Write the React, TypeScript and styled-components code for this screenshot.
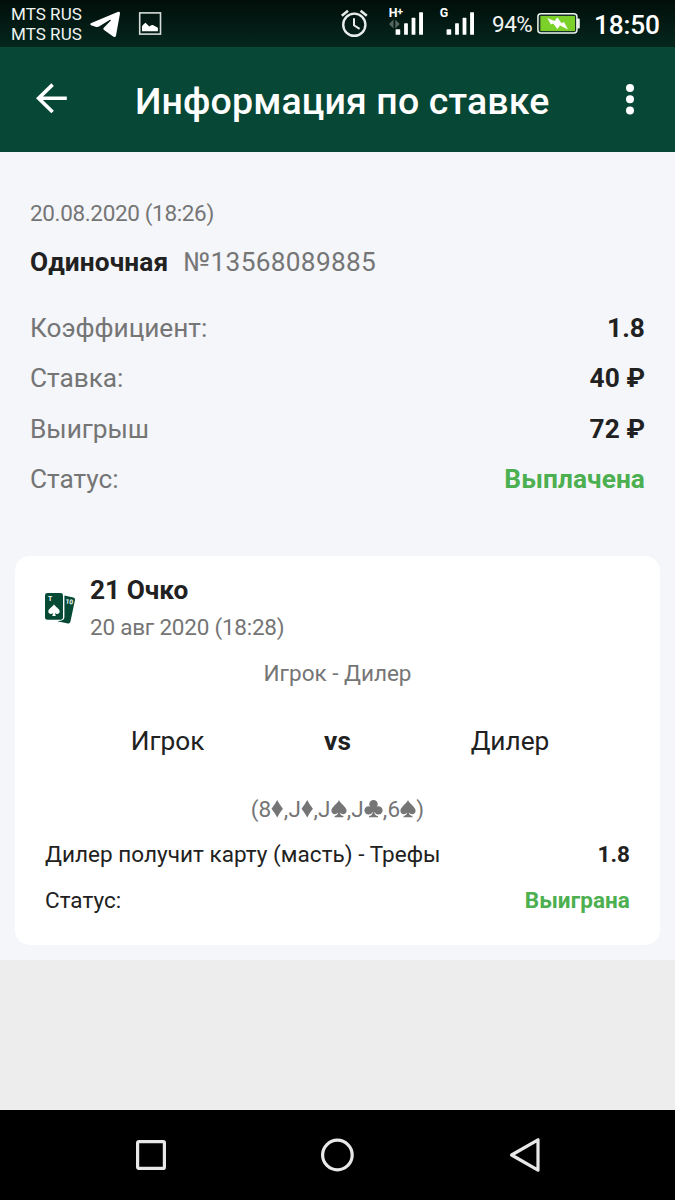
import React from "react";
import styled, { createGlobalStyle } from "styled-components";

const GlobalStyle = createGlobalStyle`
  * { box-sizing: border-box; }
  body { margin: 0; background: #ededed; font-family: Roboto, "Liberation Sans", sans-serif; }
  svg { display: block; flex: none; }
`;

const INK = "#212121";
const GREY = "#757575";
const GREEN = "#4caf50";
const BRAND = "#074735";

const Screen = styled.div`
  width: 675px;
  height: 1200px;
  display: flex;
  flex-direction: column;
  overflow: hidden;
`;

const StatusBar = styled.header`
  height: 47px;
  flex: none;
  display: flex;
  align-items: center;
  padding: 0 15px 0 11px;
  color: #fff;
  background: linear-gradient(#010e0a, #04271d);
`;

const Carriers = styled.div`
  width: 78px;
  padding-top: 3px;
  font-size: 17px;
  line-height: 19.6px;
  letter-spacing: 0.05px;
  white-space: nowrap;
  color: #f1f5f3;
`;

const Spacer = styled.div`
  flex: 1;
`;

const BatteryLevel = styled.span`
  margin: 1px 0 0 6px;
  width: 45px;
  font-size: 22.5px;
  letter-spacing: -0.5px;
  color: #f0f3f2;
`;

const Clock = styled.span`
  margin: 2px 0 0 14px;
  width: 66px;
  font-size: 26.25px;
  font-weight: 500;
  letter-spacing: -0.15px;
`;

const AppBar = styled.div`
  height: 105px;
  flex: none;
  display: flex;
  align-items: center;
  padding: 0 39px 0 35px;
  color: #fff;
  background: ${BRAND};
`;

const Title = styled.h1`
  flex: 1;
  margin: 0 0 0 66px;
  padding-top: 2px;
  font-size: 37.5px;
  font-weight: 500;
  line-height: 44px;
  letter-spacing: 0.12px;
  white-space: nowrap;
`;

const Content = styled.main`
  height: 808px;
  flex: none;
  padding: 46px 15px 0;
  background: #f4f6fa;
`;

const Summary = styled.section`
  height: 358px;
  padding: 0 15px;
  font-size: 26.25px;
`;

const Muted = styled.div<{ $center?: boolean; $tracking?: number }>`
  font-size: 22.5px;
  line-height: 30px;
  color: ${GREY};
  text-align: ${(p) => (p.$center ? "center" : "left")};
  letter-spacing: ${(p) => p.$tracking ?? 0}px;
`;

const Heading = styled.div`
  display: flex;
  gap: 15px;
  margin: 17px 0 23.8px;
  line-height: 34px;
  color: ${GREY};
`;

const Bold = styled.b`
  color: ${INK};
  font-weight: 700;
`;

const BetKind = styled(Bold)`
  letter-spacing: 0.12px;
`;

const BetNumber = styled.span`
  letter-spacing: 0.3px;
`;

const Row = styled.div`
  display: flex;
  justify-content: space-between;
  line-height: 50.5px;
  letter-spacing: -0.03px;
  color: ${GREY};
`;

const Value = styled.span<{ $positive?: boolean }>`
  font-weight: 700;
  letter-spacing: 0.08px;
  color: ${(p) => (p.$positive ? GREEN : INK)};
`;

const Card = styled.section`
  height: 389px;
  padding: 17px 30px 0;
  border-radius: 15px;
  background: #fff;
`;

const CardHead = styled.div`
  display: flex;
  gap: 14px;
  margin-bottom: 14px;
`;

const GameName = styled.div`
  height: 39px;
  font-size: 26.25px;
  font-weight: 700;
  line-height: 34px;
  color: ${INK};
`;

const Versus = styled.div`
  display: grid;
  grid-template-columns: 245px 95px 250px;
  margin: 36px -5px 36px 0;
  font-size: 26.25px;
  line-height: 34px;
  text-align: center;
  color: ${INK};
`;

const Hand = styled.div`
  display: flex;
  justify-content: center;
  align-items: center;
  height: 30px;
  margin-bottom: 7px;
  font-size: 22.5px;
  letter-spacing: 0.18px;
  color: ${GREY};
`;

const BetLine = styled.div`
  display: flex;
  justify-content: space-between;
  font-size: 22.5px;
  line-height: 46px;
  letter-spacing: 0.04px;
  color: ${INK};
`;

const NavBar = styled.nav`
  height: 90px;
  margin-top: auto;
  flex: none;
  display: flex;
  align-items: center;
  justify-content: space-between;
  padding: 0 134px 0 135px;
  background: #000;
`;

const TelegramIcon = () => (
  <svg width="32" height="47" viewBox="89 0 32 47" fill="#fff">
    <path d="M90.8 23.2 L118.2 11.8 Q120.3 11.3 120 13.5 L116 35.6 Q115.4 38 113.2 36.6 L103.7 29.7 Q102.8 28.8 103.8 27.8 L110.8 20.6 Q111 19.5 109.6 20 L99 26.6 Q97.8 27.3 96.2 26.9 L91 25.3 Q89.5 24.3 90.8 23.2Z" />
  </svg>
);

const PictureIcon = () => (
  <svg width="50" height="47" viewBox="121 0 50 47">
    <rect x="139.7" y="12.9" width="20.8" height="21.2" fill="none" stroke="#d5dcd9" strokeWidth="1.6" />
    <path d="M142 31.2 V26.3 Q143.5 24 145.5 22.8 L149.3 26.5 Q151.5 24.2 153.3 25.2 L157.9 27.8 V31.2Z" fill="#fff" />
  </svg>
);

const AlarmIcon = () => (
  <svg width="44" height="47" viewBox="340 0 44 47" fill="none" stroke="#e8edeb" strokeWidth="2.4">
    <circle cx="354.3" cy="24.7" r="11.1" />
    <path d="M354 18.2 V25.3 L359.6 28.8" strokeWidth="2" />
    <path d="M341.8 15.8 L348 10.8 M360.6 10.8 L366.8 15.8" strokeWidth="2.6" />
  </svg>
);

const SignalIcon = ({ label, roaming }: { label: string; roaming?: boolean }) => (
  <svg width="51" height="47" viewBox="384 0 51 47" fill="#fff">
    <text x="388.7" y="17.2" fontSize="12.4" fontWeight="700" fontFamily="Roboto">
      {label}
      {roaming && <tspan dy="-2.6" dx="-0.3" fontSize="10.5">+</tspan>}
    </text>
    {roaming && <path d="M389 24 L393.5 19.5 V28.5Z M399.8 24 L395.3 19.5 V28.5Z" fill="#56655f" />}
    <rect x="395.6" y="29.3" width="4.6" height="5.5" rx="0.6" />
    <rect x="404.1" y="23.3" width="3.8" height="11.5" rx="0.6" />
    <rect x="411.6" y="17.8" width="3.8" height="17" rx="0.6" />
    <rect x="419.1" y="12.2" width="3.9" height="22.6" rx="0.6" />
  </svg>
);

const BatteryIcon = () => (
  <svg width="43" height="47" viewBox="537 0 43 47">
    <rect x="576" y="18.4" width="3.8" height="10.2" rx="1" fill="#e8eeea" />
    <rect x="537.9" y="13.8" width="39" height="19.2" rx="3" fill="#173026" stroke="#eef3ee" strokeWidth="1.5" />
    <rect x="540.4" y="15.9" width="34.6" height="15.2" rx="0.6" fill="#7bd12a" />
    <path d="M547.3 18 L554.4 21 L557.4 17.4 L561.4 23 L564.2 22.3 L568 29.4 L560 25.4 L557.4 29 L553.2 23.6 L550.9 24.4Z" fill="#fff" />
  </svg>
);

const BackIcon = () => (
  <svg width="34" height="105" viewBox="35 47 34 105" fill="none" stroke="#fff" strokeWidth="3.6">
    <path d="M66.8 98.3 H39 M52.6 84.6 L38.6 98.3 L52.6 112" />
  </svg>
);

const MoreIcon = () => (
  <svg width="12" height="105" viewBox="624 47 12 105" fill="#fff">
    <circle cx="630" cy="88" r="4" />
    <circle cx="630" cy="99.3" r="4" />
    <circle cx="630" cy="110.6" r="4" />
  </svg>
);

const CardsIcon = () => (
  <svg width="31" height="71" viewBox="45 573 31 71" fill="#064a36">
    <path d="M64.4 595.6 L73.4 597.6 Q75.3 598.1 75 600 L70.4 621.8 Q69.8 623.8 68 623.4 L57.2 621.2 L61.6 620.4 Q64.4 619.8 64.4 617Z" />
    <rect x="45" y="593" width="18" height="26.8" rx="2.4" />
    <path d="M54 604.3 C55.2 607 59.7 608.6 59.7 611.6 C59.7 614 56.6 614.8 54.9 612.9 L55.8 616 H52.2 L53.1 612.9 C51.4 614.8 48.3 614 48.3 611.6 C48.3 608.6 52.8 607 54 604.3Z" fill="#fff" />
    <text x="47.9" y="601" fontSize="6.8" fontWeight="700" fontFamily="Roboto" fill="#fff">T</text>
    <text x="65.5" y="604" fontSize="6.6" fontWeight="700" fontFamily="Roboto" fill="#fff" transform="rotate(8 69 602)">10</text>
  </svg>
);

type SuitName = "diamond" | "spade" | "club";

const SUITS: Record<SuitName, { width: number; label: string; shape: React.ReactNode }> = {
  diamond: {
    width: 12.4,
    label: "♦",
    shape: <path d="M6.2 0 Q8.6 4.6 11.9 8.7 Q8.6 12.8 6.2 17.4 Q3.8 12.8 0.5 8.7 Q3.8 4.6 6.2 0Z" />,
  },
  spade: {
    width: 16,
    label: "♠",
    shape: (
      <path d="M8 0 C9.4 3.8 15.6 6.9 15.6 10.7 C15.6 14.4 11 15.3 9 12.6 C9.1 14.5 9.9 15.6 12.4 16.1 V17.3 H3.6 V16.1 C6.1 15.6 6.9 14.5 7 12.6 C5 15.3 0.4 14.4 0.4 10.7 C0.4 6.9 6.6 3.8 8 0Z" />
    ),
  },
  club: {
    width: 19,
    label: "♣",
    shape: (
      <>
        <circle cx="9.5" cy="4.3" r="4.2" />
        <circle cx="4.6" cy="10.4" r="4.2" />
        <circle cx="14.4" cy="10.4" r="4.2" />
        <path d="M7.7 6 H11.3 L11 9 L12 11.5 L10.4 12 C10.5 14.5 11.5 15.7 14 16.1 V17.3 H5 V16.1 C7.5 15.7 8.5 14.5 8.6 12 L7 11.5 L8 9Z" />
      </>
    ),
  },
};

const Suit = ({ name }: { name: SuitName }) => {
  const { width, label, shape } = SUITS[name];
  return (
    <svg width={width} height="17.5" viewBox={`0 0 ${width} 17.5`} fill={GREY} role="img" aria-label={label}>
      {shape}
    </svg>
  );
};

const HAND: { rank: string; suit: SuitName }[] = [
  { rank: "8", suit: "diamond" },
  { rank: "J", suit: "diamond" },
  { rank: "J", suit: "spade" },
  { rank: "J", suit: "club" },
  { rank: "6", suit: "spade" },
];

const SUMMARY = [
  { label: "Коэффициент:", value: "1.8" },
  { label: "Ставка:", value: "40 ₽" },
  { label: "Выигрыш", value: "72 ₽" },
  { label: "Статус:", value: "Выплачена", positive: true },
];

export default function App() {
  return (
    <Screen>
      <GlobalStyle />
      <StatusBar>
        <Carriers>
          MTS RUS
          <br />
          MTS RUS
        </Carriers>
        <TelegramIcon />
        <PictureIcon />
        <Spacer />
        <AlarmIcon />
        <SignalIcon label="H" roaming />
        <SignalIcon label="G" />
        <BatteryLevel>94%</BatteryLevel>
        <BatteryIcon />
        <Clock>18:50</Clock>
      </StatusBar>
      <AppBar>
        <BackIcon />
        <Title>Информация по ставке</Title>
        <MoreIcon />
      </AppBar>
      <Content>
        <Summary>
          <Muted $tracking={-0.35}>20.08.2020 (18:26)</Muted>
          <Heading>
            <BetKind>Одиночная</BetKind>
            <BetNumber>№13568089885</BetNumber>
          </Heading>
          {SUMMARY.map((r) => (
            <Row key={r.label}>
              <span>{r.label}</span>
              <Value $positive={r.positive}>{r.value}</Value>
            </Row>
          ))}
        </Summary>
        <Card>
          <CardHead>
            <CardsIcon />
            <div>
              <GameName>21 Очко</GameName>
              <Muted $tracking={-0.23}>20 авг 2020 (18:28)</Muted>
            </div>
          </CardHead>
          <Muted $center>Игрок - Дилер</Muted>
          <Versus>
            <span>Игрок</span>
            <Bold>vs</Bold>
            <span>Дилер</span>
          </Versus>
          <Hand>
            (
            {HAND.map((c, i) => (
              <React.Fragment key={i}>
                <span>{(i > 0 ? "," : "") + c.rank}</span>
                <Suit name={c.suit} />
              </React.Fragment>
            ))}
            )
          </Hand>
          <BetLine>
            <span>Дилер получит карту (масть) - Трефы</span>
            <Value>1.8</Value>
          </BetLine>
          <BetLine>
            <span>Статус:</span>
            <Value $positive>Выиграна</Value>
          </BetLine>
        </Card>
      </Content>
      <NavBar>
        <svg width="32" height="32" viewBox="0 0 32 32" fill="none" stroke="#e8e8e8" strokeWidth="3.2">
          <rect x="2.6" y="2.6" width="26.8" height="26.8" rx="1.2" />
        </svg>
        <svg width="34" height="34" viewBox="0 0 34 34" fill="none" stroke="#e8e8e8" strokeWidth="3.2">
          <circle cx="17.4" cy="17" r="14.8" />
        </svg>
        <svg width="34" height="38" viewBox="0 0 34 38" fill="none" stroke="#e8e8e8" strokeWidth="3.2" strokeLinejoin="round">
          <path d="M31 3.8 V34.2 L4.6 19Z" />
        </svg>
      </NavBar>
    </Screen>
  );
}
